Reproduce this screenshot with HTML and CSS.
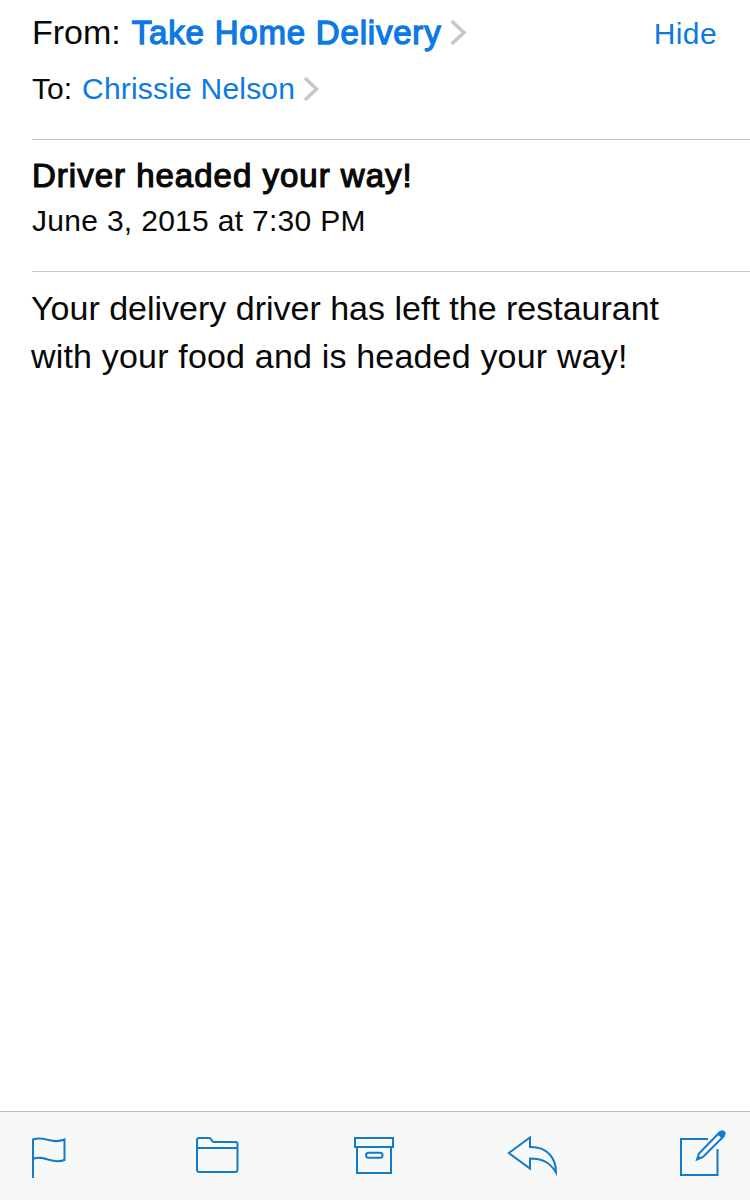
FILE: index.html
```
<!DOCTYPE html>
<html lang="en">
<head>
    <meta charset="UTF-8">
    <meta name="viewport" content="width=device-width, initial-scale=1.0">
    <title>Driver headed your way!</title>
    <link rel="stylesheet" href="styles.css">
</head>
<body>

    <header class="addresses">
        <div class="row from">
            <span class="label">From:</span>
            <a class="sender">Take Home Delivery</a>
            <svg class="chevron" width="18" height="28" viewBox="0 0 18 28"><path d="M2.5 3 L15 14.5 L2.5 26"/></svg>
            <a class="hide">Hide</a>
        </div>
        <div class="row to">
            <span class="label">To:</span>
            <a class="recipient">Chrissie Nelson</a>
            <svg class="chevron" width="17" height="26" viewBox="0 0 17 26"><path d="M2 2 L13.5 13 L2 24"/></svg>
        </div>
    </header>

    <section class="subject">
        <h1>Driver headed your way!</h1>
        <p class="date">June 3, 2015 at 7:30 PM</p>
    </section>

    <main class="message">
        <p>Your delivery driver has left the restaurant</p>
        <p class="last">with your food and is headed your way!</p>
    </main>

    <nav class="toolbar">
        <!-- flag -->
        <svg class="icon flag" width="40" height="56" viewBox="0 0 40 56">
            <path d="M3 54 V15.5 C14 11 22 21 34.5 15.5 V36 C22 41 14 30 3 35"/>
        </svg>
        <!-- folder -->
        <svg class="icon folder" width="48" height="56" viewBox="0 0 48 56">
            <path d="M3 45.5 V16 Q3 14 5 14 H15 Q16.5 14 17.3 15.5 L18 16.8 Q19 18 20.5 18 H41.5 Q43.5 18 43.5 20 V45.5 Q43.5 48 41 48 H5.5 Q3 48 3 45.5 Z M3 24 H43.5"/>
        </svg>
        <!-- archive -->
        <svg class="icon archive" width="46" height="56" viewBox="0 0 46 56">
            <path d="M3 14 H41 V23 H3 Z M5 23 V49 H39 V23"/>
            <rect x="14" y="28.8" width="16.5" height="5" rx="2.5"/>
        </svg>
        <!-- reply -->
        <svg class="icon reply" width="56" height="56" viewBox="0 0 56 56">
            <path d="M4.8 29 L26 13.5 V23 C42 22.5 52 33 52 48.5 C46 38 38 34.5 26 34.5 V44.5 Z"/>
        </svg>
        <!-- compose -->
        <svg class="icon compose" width="50" height="56" viewBox="0 0 50 56">
            <path d="M30 15 H3 V51 H39.5 V25"/>
            <path d="M19 35.5 L21 29.5 L41.5 8.5 L45.5 12.5 L25 33 Z"/>
            <path class="solid" d="M39 10 L42.5 6.8 Q44.5 5.3 46.7 7.3 Q48.6 9.3 47.2 11.2 L44 14.8 Z M18.5 36 L20 31 L23.5 34.4 Z"/>
        </svg>
    </nav>

</body>
</html>
```

FILE: styles.css
```
* {
    margin: 0;
    padding: 0;
    box-sizing: border-box;
}

body {
    height: 1200px;
    display: flex;
    flex-direction: column;
    background: #fff;
    color: #080808;
    font-family: "Liberation Sans", Arial, sans-serif;
    overflow: hidden;
    white-space: nowrap;
}

.addresses {
    margin-left: 32px;
    padding: 12px 33px 32px 0;
    border-bottom: 1px solid #c4c4c6;
}

.row {
    display: flex;
    align-items: center;
}

.from {
    height: 40px;
    font-size: 34px;
    line-height: 40px;
}

.to {
    height: 36px;
    margin-top: 19px;
    font-size: 30px;
    line-height: 36px;
}

.sender,
.recipient,
.hide {
    color: #0c79e4;
}

.sender {
    margin-left: 11px;
    padding-top: 2px;
    font-size: 33px;
    font-weight: normal;
    letter-spacing: 0.8px;
    -webkit-text-stroke: 1.3px #0c79e4;
}

.recipient {
    margin-left: 10px;
    letter-spacing: 0.2px;
}

.hide {
    margin-left: auto;
    padding-top: 4px;
    font-size: 30px;
    letter-spacing: 0.4px;
}

.chevron {
    margin-left: 8px;
    fill: none;
    stroke: #c7c7ca;
    stroke-width: 3.6;
}

.subject {
    margin-left: 32px;
    padding: 16px 0 32px;
    border-bottom: 1px solid #c9c9cb;
}

.subject h1 {
    font-size: 33px;
    font-weight: normal;
    line-height: 40px;
    letter-spacing: 1px;
    -webkit-text-stroke: 1.2px #080808;
}

.date {
    margin-top: 7px;
    font-size: 30px;
    line-height: 36px;
    letter-spacing: 0.3px;
}

.message {
    flex: 1;
    padding: 12px 0 0 31px;
    font-size: 34px;
    line-height: 48px;
}

.message .last {
    letter-spacing: 0.18px;
}

.toolbar {
    height: 89px;
    display: flex;
    padding: 12px 22px 0 30px;
    background: #f7f8f8;
    border-top: 1px solid #b9babb;
}

.icon {
    fill: none;
    stroke: #147bc8;
    stroke-width: 2;
}

.icon .solid {
    fill: #147bc8;
    stroke: none;
}

.folder {
    margin-left: 124px;
}

.archive {
    margin-left: 110px;
}

.reply {
    margin-left: 106px;
}

.compose {
    margin-left: 118px;
}
```
